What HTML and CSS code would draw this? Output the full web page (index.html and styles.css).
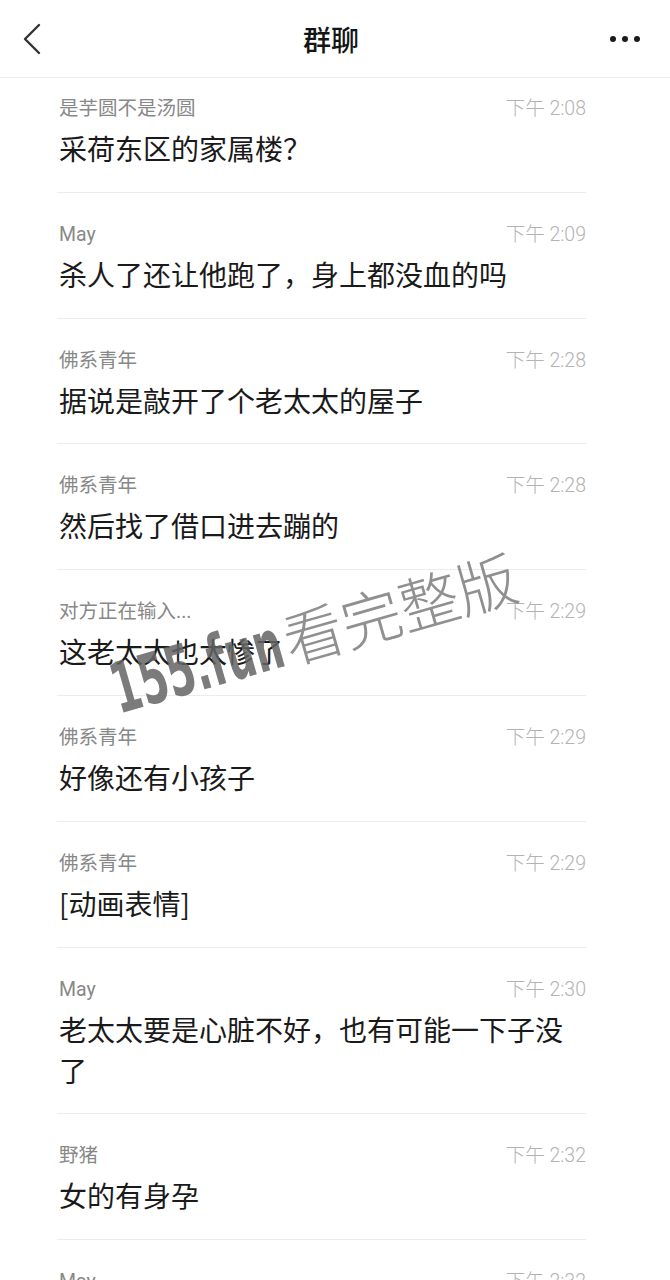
FILE: index.html
```html
<!DOCTYPE html>
<html lang="zh-CN">
<head>
    <meta charset="UTF-8">
    <meta name="viewport" content="width=device-width, initial-scale=1.0">
    <title>群聊</title>
    <link rel="stylesheet" href="styles.css">
</head>
<body>
    <div class="page">
        <header class="topbar">
            <div class="topbar-left">
                <svg class="back-icon" width="24" height="36" viewBox="0 0 24 36">
                    <polyline points="19,4 5,18 19,32" fill="none" stroke="#333" stroke-width="2.4" stroke-linecap="round" stroke-linejoin="round"/>
                </svg>
            </div>
            <h1 class="title">群聊</h1>
            <div class="topbar-right">
                <svg class="more-icon" width="30" height="8" viewBox="0 0 30 8">
                    <circle cx="3" cy="4" r="3" fill="#1a1a1a"/>
                    <circle cx="15" cy="4" r="3" fill="#1a1a1a"/>
                    <circle cx="27" cy="4" r="3" fill="#1a1a1a"/>
                </svg>
            </div>
        </header>

        <ul class="msg-list">
            <li class="msg first">
                <div class="meta"><span class="name">是芋圆不是汤圆</span><span class="time">下午 2:08</span></div>
                <p class="text">采荷东区的家属楼？</p>
            </li>
            <li class="msg">
                <div class="meta"><span class="name">May</span><span class="time">下午 2:09</span></div>
                <p class="text">杀人了还让他跑了，身上都没血的吗</p>
            </li>
            <li class="msg">
                <div class="meta"><span class="name">佛系青年</span><span class="time">下午 2:28</span></div>
                <p class="text">据说是敲开了个老太太的屋子</p>
            </li>
            <li class="msg">
                <div class="meta"><span class="name">佛系青年</span><span class="time">下午 2:28</span></div>
                <p class="text">然后找了借口进去蹦的</p>
            </li>
            <li class="msg">
                <div class="meta"><span class="name">对方正在输入...</span><span class="time">下午 2:29</span></div>
                <p class="text">这老太太也太惨了</p>
            </li>
            <li class="msg">
                <div class="meta"><span class="name">佛系青年</span><span class="time">下午 2:29</span></div>
                <p class="text">好像还有小孩子</p>
            </li>
            <li class="msg">
                <div class="meta"><span class="name">佛系青年</span><span class="time">下午 2:29</span></div>
                <p class="text">[动画表情]</p>
            </li>
            <li class="msg">
                <div class="meta"><span class="name">May</span><span class="time">下午 2:30</span></div>
                <p class="text">老太太要是心脏不好，也有可能一下子没了</p>
            </li>
            <li class="msg">
                <div class="meta"><span class="name">野猪</span><span class="time">下午 2:32</span></div>
                <p class="text">女的有身孕</p>
            </li>
            <li class="msg">
                <div class="meta"><span class="name">May</span><span class="time">下午 2:32</span></div>
            </li>
        </ul>

        <div class="watermark">
            <span class="wm-site"><span class="wm-site-text">155.fun</span></span>
            <span class="wm-cta">看完整版</span>
        </div>
    </div>
</body>
</html>
```

FILE: styles.css
```css
body { margin: 0; background: #fff; }
.page {
    position: relative; width: 670px; height: 1280px; overflow: hidden;
    font-family: Roboto, "Noto Sans CJK SC", sans-serif;
}

/* top bar */
.topbar {
    height: 77px; border-bottom: 1px solid #ededed;
    display: grid; grid-template-columns: 1fr auto 1fr; align-items: center;
}
.topbar-left { padding-left: 20px; display: flex; align-items: center; }
.topbar-right { padding-right: 30px; display: flex; justify-content: flex-end; align-items: center; }
.back-icon, .more-icon { display: block; }
.title {
    margin: 0 8px 0 0; font-family: "Noto Sans CJK SC", sans-serif;
    font-size: 28px; font-weight: 500; line-height: 36px; color: #151515;
}

/* messages */
.msg-list { list-style: none; margin: 0 0 0 57px; padding: 0; width: 529px; }
.msg { padding: 30px 0 22.8px; border-bottom: 1px solid #ececec; }
.msg.first { padding-top: 19px; }
.meta { display: flex; justify-content: space-between; align-items: baseline; height: 24px; line-height: 24px; }
.name {
    font-family: Roboto, "Noto Sans CJK SC", sans-serif;
    font-size: 19.5px; color: #888; padding-left: 2px;
}
.time {
    font-family: Roboto, "Noto Sans CJK SC", sans-serif;
    font-size: 19.5px; font-weight: 300; color: #b3b3b3;
}
.text {
    margin: 7px 0 0; padding-left: 2px;
    font-family: "Noto Sans CJK SC", sans-serif;
    font-size: 28px; line-height: 41px; color: #1a1a1a;
}

/* watermark overlay */
.watermark {
    position: absolute; left: 104px; top: 594px;
    display: flex; align-items: baseline; gap: 4px;
    transform: rotate(-16deg); white-space: nowrap; pointer-events: none;
}
.wm-site { display: inline-block; width: 175px; }
.wm-site-text {
    display: inline-block; transform: scaleX(0.645); transform-origin: left bottom;
    font-family: "DejaVu Sans", sans-serif; font-stretch: condensed; font-weight: bold;
    font-size: 70px; line-height: 74px; color: rgba(100, 100, 100, 0.85);
}
.wm-cta {
    font-family: "Noto Sans CJK SC", sans-serif; font-weight: 300;
    font-size: 60px; line-height: 74px; color: rgba(125, 125, 125, 0.85);
}
```
